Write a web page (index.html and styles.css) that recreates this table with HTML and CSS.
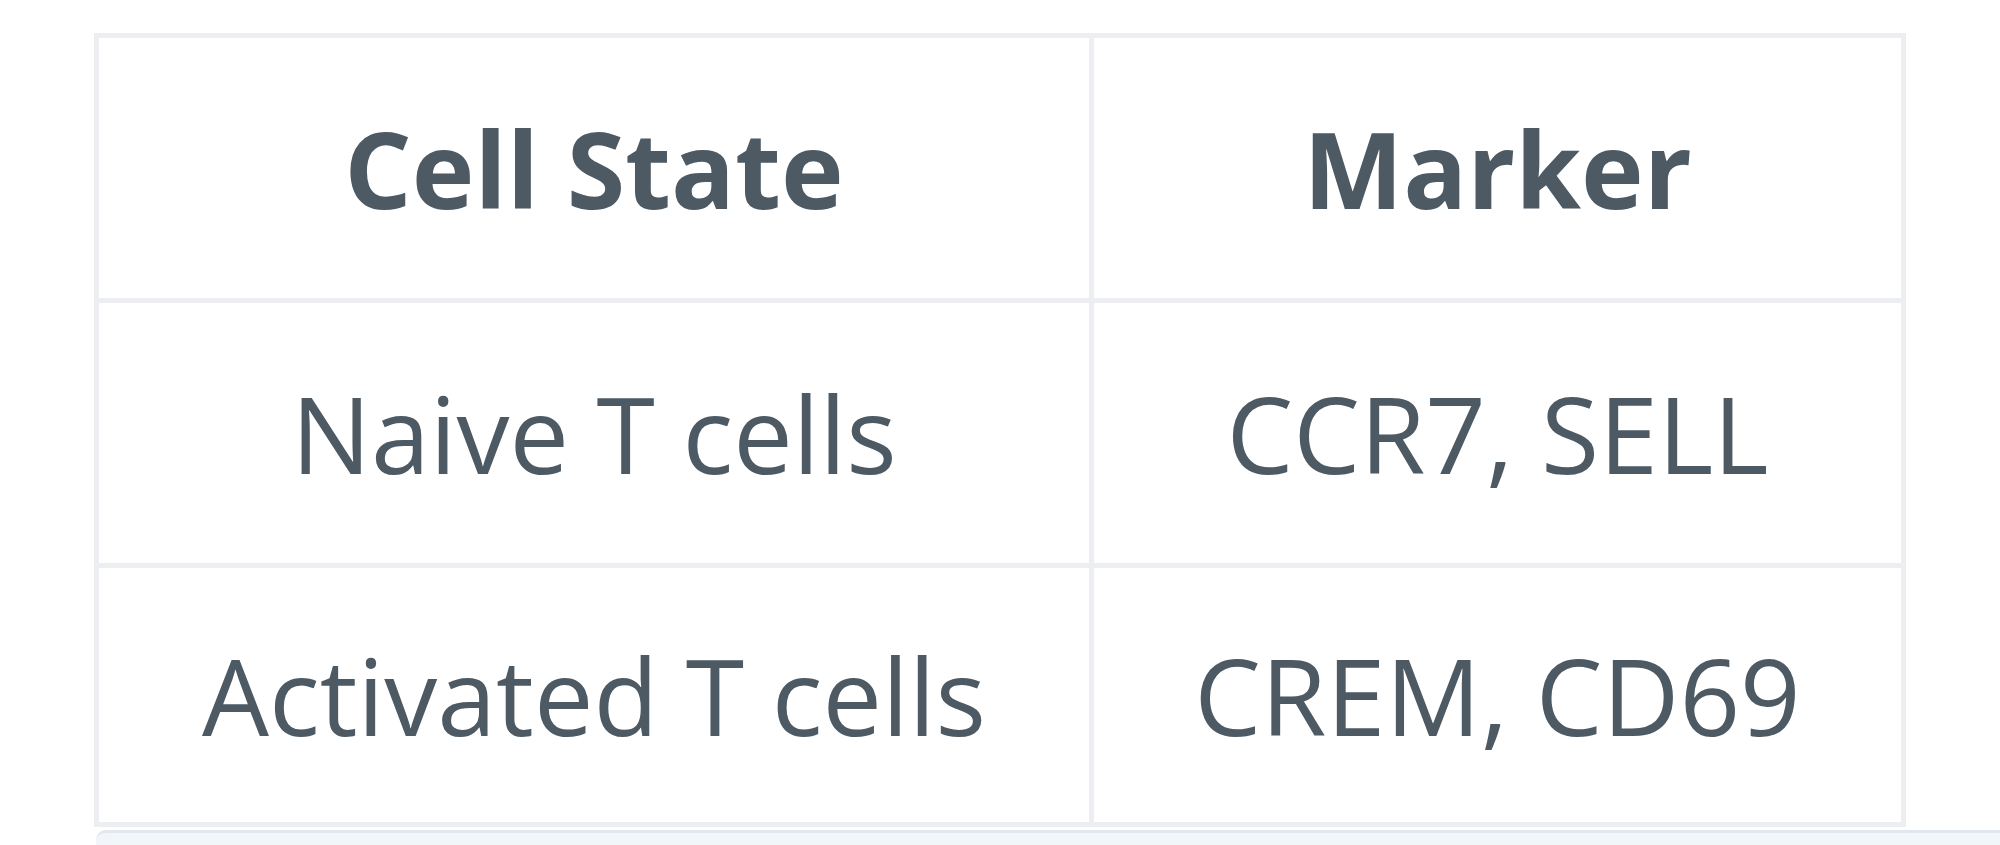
FILE: index.html
```html
<!DOCTYPE html>
<html lang="en">
  <head>
    <meta charset="UTF-8">
    <meta name="viewport" content="width=device-width, initial-scale=1.0">
    <title>Cell State Markers</title>
    <link rel="stylesheet" href="styles.css">
  </head>
  <body>
    <div class="page">
      <table class="marker-table">
        <thead>
          <tr>
            <th class="col-state">Cell State</th>
            <th class="col-marker">Marker</th>
          </tr>
        </thead>
        <tbody>
          <tr>
            <td>Naive T cells</td>
            <td>CCR7, SELL</td>
          </tr>
          <tr class="last-row">
            <td>Activated T cells</td>
            <td>CREM, CD69</td>
          </tr>
        </tbody>
      </table>
      <div class="next-block"></div>
    </div>
  </body>
</html>
```

FILE: styles.css
```css
html,
body {
  margin: 0;
  padding: 0;
  background-color: #fff;
  overflow: hidden;
}

body {
  font-family: "Open Sans", "Noto Sans", sans-serif;
  color: #4d5a64;
}

.page {
  padding: 33px 0 0 94px;
  height: 845px;
  box-sizing: border-box;
}

.marker-table {
  border-collapse: collapse;
  table-layout: fixed;
  width: 1801px;
  font-size: 106px;
  line-height: 1.36;
}

.col-state {
  width: 990px;
}

.col-marker {
  width: 807px;
}

.marker-table th,
.marker-table td {
  border: 5px solid #eceef1;
  text-align: center;
  vertical-align: middle;
  padding: 0;
  height: 260px;
  white-space: nowrap;
}

.marker-table th {
  font-weight: 700;
}

.marker-table td {
  font-weight: 400;
}

.marker-table .last-row td {
  height: 254px;
}

.next-block {
  margin-top: 3px;
  margin-left: 2px;
  height: 40px;
  background-color: #f3f6f9;
  border-top: 3px solid #e0e7ef;
  border-top-left-radius: 10px;
}
```
